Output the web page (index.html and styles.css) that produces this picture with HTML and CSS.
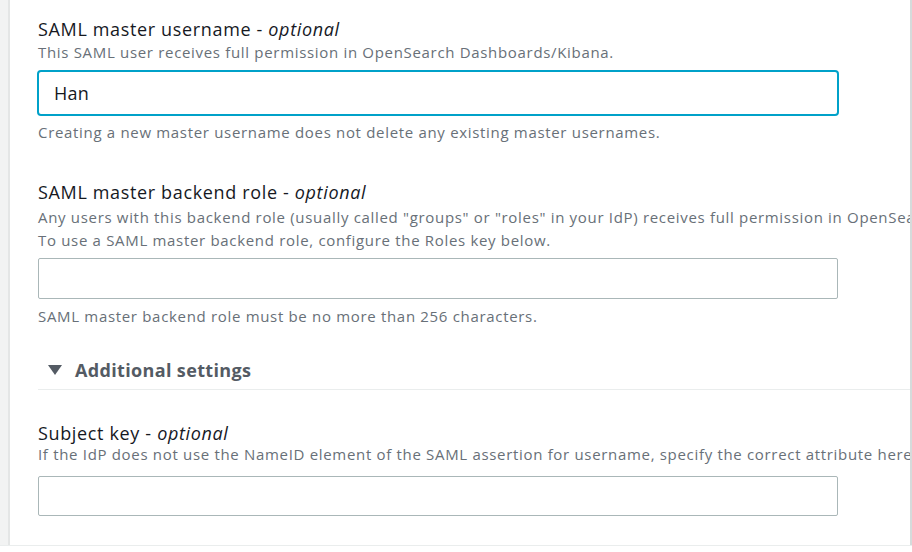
FILE: index.html
```html
<!DOCTYPE html>
<html>
<head>
<meta charset="utf-8">
<link rel="stylesheet" href="styles.css">
</head>
<body>
<div class="page">
  <div class="rail"></div>
  <div class="card">
    <div class="field first">
      <div class="label">SAML master username - <i>optional</i></div>
      <div class="desc">This SAML user receives full permission in OpenSearch Dashboards/Kibana.</div>
      <div class="input focused">Han</div>
      <div class="constraint">Creating a new master username does not delete any existing master usernames.</div>
    </div>
    <div class="field second">
      <div class="label">SAML master backend role - <i>optional</i></div>
      <div class="desc">Any users with this backend role (usually called "groups" or "roles" in your IdP) receives full permission in OpenSearch Dashboards/Kibana.<br>To use a SAML master backend role, configure the Roles key below.</div>
      <div class="input"></div>
      <div class="constraint">SAML master backend role must be no more than 256 characters.</div>
    </div>
    <div class="expander">
      <span class="caret"></span>
      <span class="exp-title">Additional settings</span>
    </div>
    <div class="field third">
      <div class="label">Subject key - <i>optional</i></div>
      <div class="desc">If the IdP does not use the NameID element of the SAML assertion for username, specify the correct attribute here.</div>
      <div class="input"></div>
    </div>
  </div>
</div>
</body>
</html>
```
FILE: styles.css
```css
html, body {
  margin: 0;
  padding: 0;
  background: #ffffff;
}
body {
  font-family: "Open Sans", "Noto Sans", sans-serif;
  width: 912px;
  height: 552px;
  overflow: hidden;
}
.page {
  display: flex;
  height: 545px;
  border-bottom: 1px solid #eaeded;
}
.rail {
  width: 8px;
  flex: none;
  background: #f2f3f3;
  border-right: 2px solid #e4e6e6;
}
.card {
  flex: 1;
  min-width: 0;
  border-right: 2px solid #d5dbdb;
  padding-left: 28px;
  overflow: hidden;
  white-space: nowrap;
}
.field {
  display: flex;
  flex-direction: column;
}
.first { padding-top: 17px; }
.second { padding-top: 38px; }
.third { padding-top: 31px; }
.label {
  font-size: 18px;
  letter-spacing: 0.65px;
  line-height: 24px;
  color: #16191f;
}
.label i { font-style: italic; }
.desc {
  font-size: 15px;
  letter-spacing: 0.68px;
  line-height: 23px;
  color: #687078;
}
.second .desc { margin-top: 2px; }
.third .desc { margin-top: -2px; }
.input {
  box-sizing: border-box;
  width: 800px;
  height: 41px;
  border: 1px solid #aab7b8;
  border-radius: 2px;
  margin-top: 6px;
  font-size: 18px;
  letter-spacing: 0.3px;
  color: #16191f;
  display: flex;
  align-items: center;
  padding-left: 15px;
}
.third .input {
  height: 40px;
  margin-top: 10px;
}
.input.focused {
  width: 802px;
  height: 46px;
  margin-left: -1px;
  margin-top: 6px;
  border: 2px solid #00a1c9;
  border-radius: 4px;
}
.constraint {
  font-size: 15px;
  letter-spacing: 0.68px;
  line-height: 20px;
  color: #687078;
  margin-top: 6px;
}
.second .constraint { margin-top: 7px; }
.expander {
  display: flex;
  align-items: center;
  gap: 13px;
  margin-top: 28px;
  height: 31px;
  padding-left: 10px;
  border-bottom: 1px solid #eaeded;
  padding-bottom: 4px;
}
.caret {
  width: 0;
  height: 0;
  border-left: 7px solid transparent;
  border-right: 7px solid transparent;
  border-top: 10px solid #545b64;
}
.exp-title {
  font-weight: 700;
  font-size: 18px;
  letter-spacing: 0.35px;
  color: #545b64;
}
```
